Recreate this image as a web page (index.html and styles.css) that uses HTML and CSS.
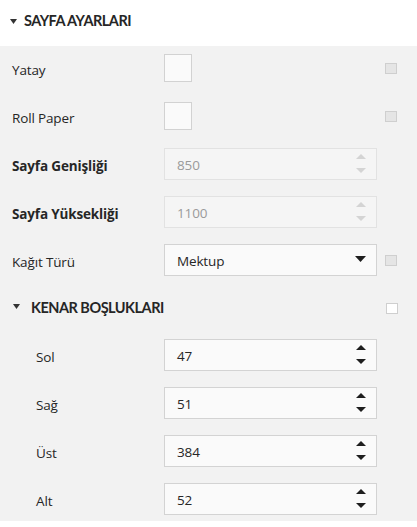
FILE: index.html
```html
<!DOCTYPE html>
<html lang="tr">
<head>
<meta charset="utf-8">
<title>Sayfa Ayarları</title>
<link rel="stylesheet" href="styles.css">
</head>
<body>
<div class="panel">
  <div class="panel-head">
    <svg class="caret" width="7" height="5" viewBox="0 0 7 5"><polygon points="0,0 7,0 3.5,5" fill="#333"/></svg>
    <span class="head-title">SAYFA AYARLARI</span>
  </div>
  <div class="panel-body">
    <div class="row">
      <span class="label">Yatay</span>
      <div class="ctl"><span class="bigcheck"></span></div>
      <span class="mini"></span>
    </div>
    <div class="row">
      <span class="label">Roll Paper</span>
      <div class="ctl"><span class="bigcheck"></span></div>
      <span class="mini"></span>
    </div>
    <div class="row">
      <span class="label bold">Sayfa Genişliği</span>
      <div class="ctl"><div class="field disabled"><span class="val">850</span>
        <span class="spin"><svg width="10" height="5" viewBox="0 0 10 5"><polygon points="0,5 10,5 5,0"/></svg><svg width="10" height="5" viewBox="0 0 10 5"><polygon points="0,0 10,0 5,5"/></svg></span></div></div>
      <span></span>
    </div>
    <div class="row">
      <span class="label bold">Sayfa Yüksekliği</span>
      <div class="ctl"><div class="field disabled"><span class="val">1100</span>
        <span class="spin"><svg width="10" height="5" viewBox="0 0 10 5"><polygon points="0,5 10,5 5,0"/></svg><svg width="10" height="5" viewBox="0 0 10 5"><polygon points="0,0 10,0 5,5"/></svg></span></div></div>
      <span></span>
    </div>
    <div class="row">
      <span class="label">Kağıt Türü</span>
      <div class="ctl"><div class="field"><span class="val">Mektup</span>
        <svg class="drop" width="11" height="6" viewBox="0 0 11 6"><polygon points="0,0 11,0 5.5,6"/></svg></div></div>
      <span class="mini"></span>
    </div>
    <div class="section">
      <svg class="caret2" width="7" height="5" viewBox="0 0 7 5"><polygon points="0,0 7,0 3.5,5" fill="#333"/></svg>
      <span class="section-title">KENAR BOŞLUKLARI</span>
      <span class="mini white"></span>
    </div>
    <div class="row sub">
      <span class="label">Sol</span>
      <div class="ctl"><div class="field"><span class="val">47</span>
        <span class="spin"><svg width="10" height="5" viewBox="0 0 10 5"><polygon points="0,5 10,5 5,0"/></svg><svg width="10" height="5" viewBox="0 0 10 5"><polygon points="0,0 10,0 5,5"/></svg></span></div></div>
      <span></span>
    </div>
    <div class="row sub">
      <span class="label">Sağ</span>
      <div class="ctl"><div class="field"><span class="val">51</span>
        <span class="spin"><svg width="10" height="5" viewBox="0 0 10 5"><polygon points="0,5 10,5 5,0"/></svg><svg width="10" height="5" viewBox="0 0 10 5"><polygon points="0,0 10,0 5,5"/></svg></span></div></div>
      <span></span>
    </div>
    <div class="row sub">
      <span class="label">Üst</span>
      <div class="ctl"><div class="field"><span class="val">384</span>
        <span class="spin"><svg width="10" height="5" viewBox="0 0 10 5"><polygon points="0,5 10,5 5,0"/></svg><svg width="10" height="5" viewBox="0 0 10 5"><polygon points="0,0 10,0 5,5"/></svg></span></div></div>
      <span></span>
    </div>
    <div class="row sub">
      <span class="label">Alt</span>
      <div class="ctl"><div class="field"><span class="val">52</span>
        <span class="spin"><svg width="10" height="5" viewBox="0 0 10 5"><polygon points="0,5 10,5 5,0"/></svg><svg width="10" height="5" viewBox="0 0 10 5"><polygon points="0,0 10,0 5,5"/></svg></span></div></div>
      <span></span>
    </div>
  </div>
</div>
</body>
</html>
```
FILE: styles.css
```css
* { box-sizing: border-box; }
html, body { margin: 0; padding: 0; background: #ffffff; }
body {
  font-family: "Open Sans", "Noto Sans", sans-serif;
  font-size: 13.5px;
  letter-spacing: -0.15px;
  color: #262626;
  width: 417px;
}
.panel-head {
  height: 46px;
  display: flex;
  align-items: center;
  padding-left: 10px;
  background: #ffffff;
}
.caret { margin-right: 7px; margin-top: -4px; }
.head-title {
  font-family: "Lato", "Open Sans", sans-serif;
  font-weight: 700;
  font-size: 14.5px;
  letter-spacing: -0.5px;
  color: #262626;
  margin-top: -5px;
}
.panel-body {
  background: #f2f2f2;
  padding: 6px 0 6px 0;
  display: flex;
  flex-direction: column;
  gap: 16px;
}
.row {
  display: grid;
  grid-template-columns: 152px 213px 20px;
  padding-left: 12px;
  height: 32px;
  align-items: center;
}
.row.sub { padding-left: 36px; grid-template-columns: 128px 213px 20px; }
.label { padding-top: 4px; white-space: nowrap; }
.label.bold { font-weight: 700; }
.ctl { display: flex; align-items: center; height: 32px; }
.bigcheck {
  display: block;
  width: 28px;
  height: 28px;
  background: #fafafa;
  border: 1px solid #d2d2d2;
}
.mini {
  display: block;
  justify-self: end;
  width: 12px;
  height: 11px;
  background: #e5e5e5;
  border: 1px solid #cfcfcf;
  margin-top: 1px;
}
.mini.white { background: #ffffff; }
.field {
  width: 213px;
  height: 32px;
  background: #fafafa;
  border: 1px solid #d3d3d3;
  display: flex;
  align-items: center;
  justify-content: space-between;
  padding: 0 10px 0 12px;
  color: #262626;
  font-size: 13.5px;
}
.field.disabled {
  background: #f5f5f5;
  border-color: #e2e2e2;
  color: #9a9a9a;
}
.val { padding-top: 1px; }
.spin {
  display: flex;
  flex-direction: column;
  gap: 9px;
  height: 32px;
  justify-content: center;
  padding-bottom: 1px;
}
.spin svg { display: block; fill: #1e1e1e; }
.field.disabled .spin svg { fill: #d4d4d4; }
.drop { fill: #1e1e1e; margin-top: -2px; }
.section {
  height: 31px;
  display: grid;
  grid-template-columns: 18px 347px 20px;
  padding-left: 13px;
  align-items: center;
}
.caret2 { margin-top: -2px; }
.section-title {
  font-family: "Lato", "Open Sans", sans-serif;
  font-weight: 700;
  font-size: 14.5px;
  letter-spacing: -0.5px;
  color: #262626;
}
.section .mini { justify-self: end; margin-right: 0; }
```
